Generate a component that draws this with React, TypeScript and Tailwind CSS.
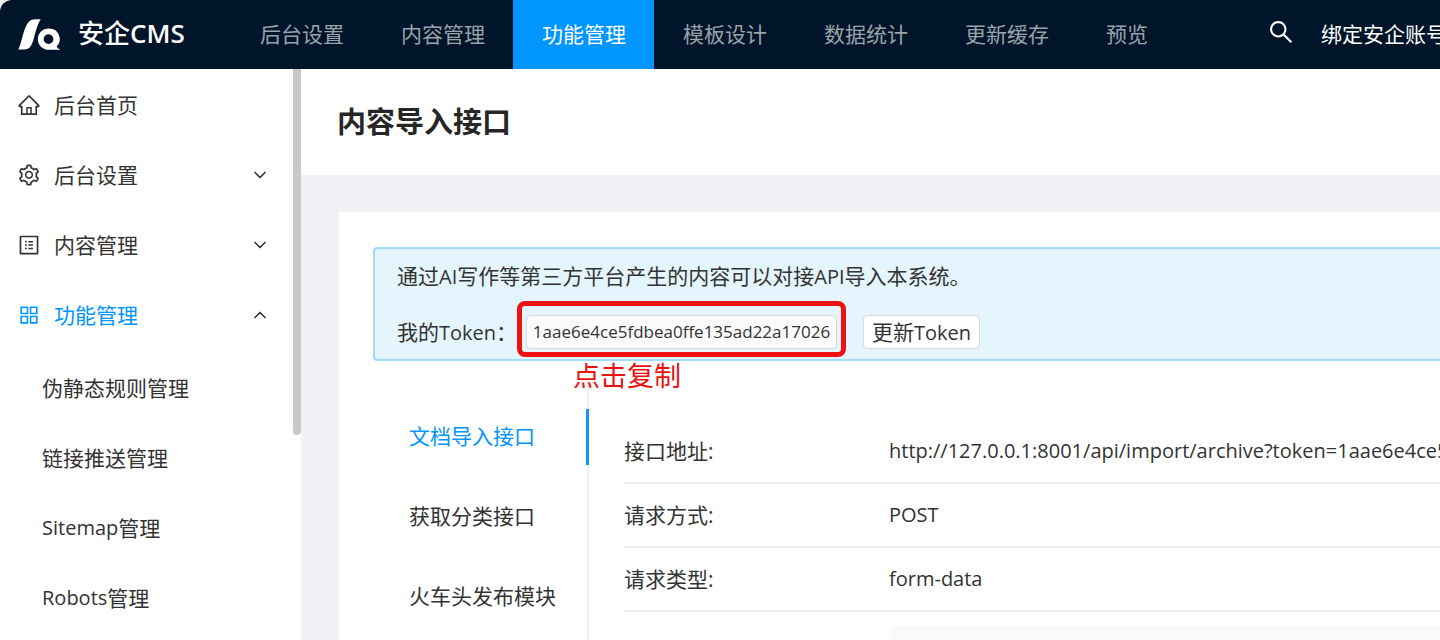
import type { ReactNode } from "react";
import type { IconType } from "react-icons";
import {
  AiOutlineAppstore,
  AiOutlineHome,
  AiOutlineProfile,
  AiOutlineSearch,
  AiOutlineSetting,
} from "react-icons/ai";
import { ChevronDown, ChevronUp } from "lucide-react";
import clsx from "clsx";

const token = "1aae6e4ce5fdbea0ffe135ad22a17026";

const topMenus = ["后台设置", "内容管理", "功能管理", "模板设计", "数据统计", "更新缓存", "预览"];

const sideMenus: { label: string; icon: IconType; open?: boolean; leaf?: boolean }[] = [
  { label: "后台首页", icon: AiOutlineHome, leaf: true },
  { label: "后台设置", icon: AiOutlineSetting },
  { label: "内容管理", icon: AiOutlineProfile },
  { label: "功能管理", icon: AiOutlineAppstore, open: true },
];

const subMenus: { latin?: string; label: string }[] = [
  { label: "伪静态规则管理" },
  { label: "链接推送管理" },
  { latin: "Sitemap", label: "管理" },
  { latin: "Robots", label: "管理" },
];

const tabs = ["文档导入接口", "获取分类接口", "火车头发布模块"];

const rows = [
  { label: "接口地址:", value: `http://127.0.0.1:8001/api/import/archive?token=${token}` },
  { label: "请求方式:", value: "POST" },
  { label: "请求类型:", value: "form-data" },
];

const Latin = ({ children }: { children: ReactNode }) => <span className="text-[20px]">{children}</span>;

const Logo = () => (
  <svg viewBox="0 0 44 32" className="h-8 w-11 shrink-0" fill="#fff" aria-hidden="true">
    <path d="M0.3 30.6C3 25 4 18 6 12.500C8.500 4.500 11 1 15.500 0.400C18 0.100 21 0.300 22.800 0.300C20 4 18.300 11 16.300 17.500C14 26 12.500 29.500 8 30.300C6 30.600 3 30.600 0.300 30.600Z" />
    <path
      fillRule="evenodd"
      d="M30.500 9.500A10.600 10.600 0 1 0 30.500 30.800H42.500C40.500 30 39 28.600 38.600 27.600A10.600 10.600 0 0 0 30.500 9.500ZM30.500 15.200A4.900 4.900 0 1 1 30.500 25A4.900 4.900 0 1 1 30.500 15.200Z"
    />
  </svg>
);

const Header = () => (
  <header className="flex h-[69px] items-center overflow-hidden rounded-tl-xl bg-[#001529] pl-[18px] whitespace-nowrap">
    <a href="#home" className="flex w-[213px] shrink-0 items-center gap-4 text-white">
      <Logo />
      <span className="pb-1 text-[26px] leading-9 font-medium">
        安企<span className="font-semibold">CMS</span>
      </span>
    </a>
    <nav className="flex h-full shrink-0">
      {topMenus.map((label) => (
        <a
          key={label}
          href="#menu"
          className={clsx(
            "flex items-center pr-7 pb-0.5 pl-[29px]",
            label === "功能管理" ? "bg-[#0095ff] text-white" : "text-[#9aa3ab]"
          )}
        >
          {label}
        </a>
      ))}
    </nav>
    <button type="button" aria-label="搜索" className="ml-[91px] shrink-0 pb-1.5 text-[28px] text-white">
      <AiOutlineSearch />
    </button>
    <a href="#account" className="ml-[26px] shrink-0 pb-0.5 text-white">
      绑定安企账号
    </a>
  </header>
);

const Sidebar = () => (
  <aside className="flex w-[301px] shrink-0 bg-white">
    <nav className="flex-1 pt-px">
      {sideMenus.map(({ label, icon: Icon, open, leaf }) => {
        const Arrow = open ? ChevronUp : ChevronDown;
        return (
          <button
            key={label}
            type="button"
            aria-expanded={leaf ? undefined : !!open}
            className="flex h-[70px] w-full items-center pr-[23px] pl-[17px] text-[#333]"
          >
            <Icon className={clsx("mr-[13px] text-[24px]", open && "text-[#0095ff]")} />
            <span className={clsx(open && "text-[#0095ff]")}>{label}</span>
            {!leaf && <Arrow className="ml-auto size-5" strokeWidth={2} />}
          </button>
        );
      })}
      <ul className="mt-[3px]">
        {subMenus.map(({ latin, label }) => (
          <li key={latin ?? label}>
            <a href="#sub" className="flex h-[70px] items-center pl-[42px] text-[#333]">
              {latin && <Latin>{latin}</Latin>}
              {label}
            </a>
          </li>
        ))}
      </ul>
    </nav>
    {/* scroll thumb */}
    <div className="h-[366px] w-2 rounded-b bg-[#c9c9c9]" />
  </aside>
);

const TokenNotice = () => (
  <section className="h-[114px] rounded-l-sm border-2 border-r-0 border-[#a3dbf8] bg-[#e4f5fd] pt-[11px] pl-[22px] whitespace-nowrap">
    <p className="leading-8">
      通过<Latin>AI</Latin>写作等第三方平台产生的内容可以对接<Latin>API</Latin>导入本系统。
    </p>
    <div className="mt-[11px] flex h-14 items-center">
      <span className="w-[120px]">
        我的<Latin>Token</Latin>：
      </span>
      <div className="relative mb-1.5 h-14 w-[329px] rounded-lg border-[5px] border-[#ee1111] px-1 pt-[9px]">
        <button
          type="button"
          className="block h-[34px] w-full rounded-sm border border-[#d9d9d9] bg-[#fafafa] text-center text-[17px] leading-8 text-[#333]"
        >
          {token}
        </button>
        <span className="absolute top-full left-[51px] mt-1.5 text-[27px] leading-9 text-[#ee1111]">点击复制</span>
      </div>
      <button type="button" className="ml-[17px] h-[34px] rounded-sm border border-[#d9d9d9] bg-white px-2 leading-8">
        更新<Latin>Token</Latin>
      </button>
    </div>
  </section>
);

const App = () => (
  <div className="flex h-screen flex-col overflow-hidden bg-[#eff1f4] font-['Open_Sans','Noto_Sans_CJK_SC',sans-serif] text-[21px] leading-8 text-[#333]">
    <Header />
    <div className="flex min-h-0 flex-1">
      <Sidebar />
      <main className="flex min-w-0 flex-1 flex-col overflow-hidden">
        <div className="flex h-[106px] shrink-0 items-center bg-white pl-9">
          <h1 className="text-[29px] leading-10 font-bold text-[#262626]">内容导入接口</h1>
        </div>
        <div className="mt-[37px] ml-[38px] flex-1 bg-white pt-[35px] pl-[34px]">
          <TokenNotice />
          <div className="mt-6 flex h-full">
            <div role="tablist" aria-orientation="vertical" className="flex w-[216px] shrink-0 flex-col gap-6 border-r-2 border-[#f0f0f0] pt-6">
              {tabs.map((label, index) => (
                <button
                  key={label}
                  type="button"
                  role="tab"
                  aria-selected={index === 0}
                  className={clsx(
                    "-mr-0.5 h-14 pb-0.5 pl-9 text-left",
                    index === 0 && "border-r-3 border-[#1890ff] text-[#0095ff]"
                  )}
                >
                  {label}
                </button>
              ))}
            </div>
            <div className="min-w-0 flex-1 overflow-hidden pt-[35px] pl-[35px] whitespace-nowrap">
              <dl>
                {rows.map((row) => (
                  <div key={row.label} className="flex h-16 items-center border-b-2 border-[#f0f0f0]">
                    <dt className="w-[265px] shrink-0">{row.label}</dt>
                    <dd className="text-[20px]">{row.value}</dd>
                  </div>
                ))}
              </dl>
              <div className="mt-3.5 ml-[265px] h-20 rounded-tl-md bg-[#fafafa]" />
            </div>
          </div>
        </div>
      </main>
    </div>
  </div>
);

export default App;
